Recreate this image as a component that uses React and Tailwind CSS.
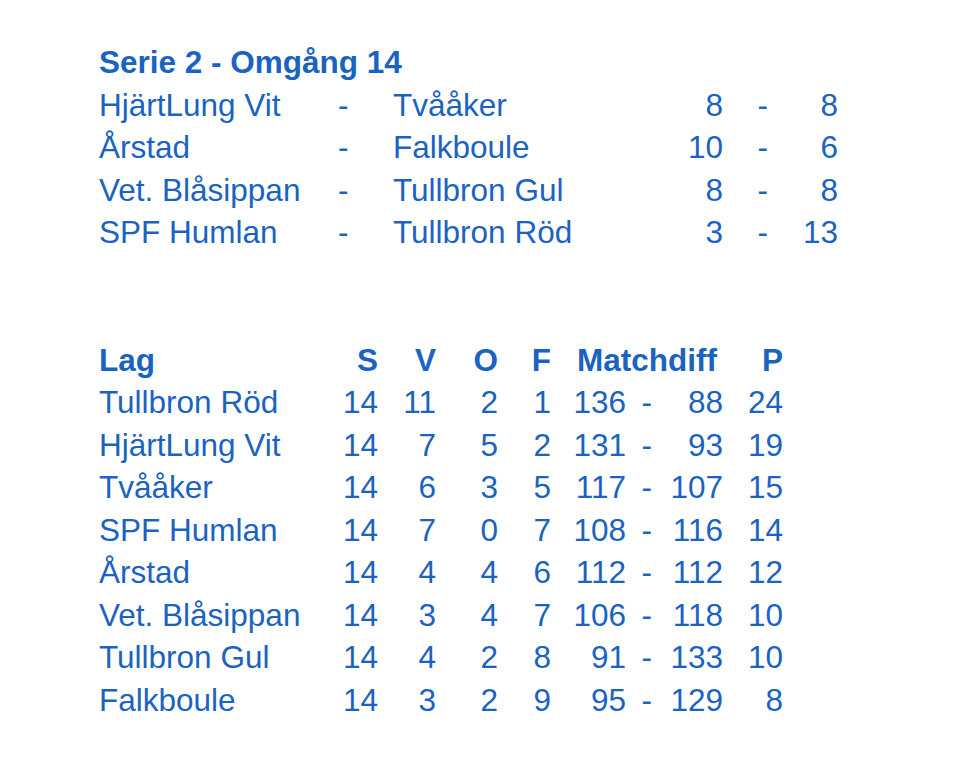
import React from "react";

const matches = [
  ["HjärtLung Vit", "Tvååker", 8, 8],
  ["Årstad", "Falkboule", 10, 6],
  ["Vet. Blåsippan", "Tullbron Gul", 8, 8],
  ["SPF Humlan", "Tullbron Röd", 3, 13],
];

const table = [
  ["Tullbron Röd", 14, 11, 2, 1, 136, 88, 24],
  ["HjärtLung Vit", 14, 7, 5, 2, 131, 93, 19],
  ["Tvååker", 14, 6, 3, 5, 117, 107, 15],
  ["SPF Humlan", 14, 7, 0, 7, 108, 116, 14],
  ["Årstad", 14, 4, 4, 6, 112, 112, 12],
  ["Vet. Blåsippan", 14, 3, 4, 7, 106, 118, 10],
  ["Tullbron Gul", 14, 4, 2, 8, 91, 133, 10],
  ["Falkboule", 14, 3, 2, 9, 95, 129, 8],
];

const matchCols = "grid grid-cols-[239px_55px_250px_80px_45px_70px]";
const tableCols = "grid grid-cols-[219px_60px_58px_62px_53px_75px_26px_71px_60px]";

export default function App() {
  return (
    <div
      className="min-h-[774px] w-[960px] bg-white pl-[99px] pt-[41px] text-[31.5px] leading-[42.5px] text-[#1a63c1]"
      style={{ fontFamily: '"Liberation Sans", Arial, sans-serif' }}
    >
      {/* round results */}
      <div className="font-bold">Serie 2 - Omgång 14</div>
      {matches.map(([home, away, a, b]) => (
        <div key={home} className={matchCols}>
          <div>{home}</div>
          <div>-</div>
          <div>{away}</div>
          <div className="text-right">{a}</div>
          <div className="text-right">-</div>
          <div className="text-right">{b}</div>
        </div>
      ))}

      {/* standings */}
      <div className="mt-[85px]">
        <div className={`${tableCols} font-bold`}>
          <div>Lag</div>
          <div className="text-right">S</div>
          <div className="text-right">V</div>
          <div className="text-right">O</div>
          <div className="text-right">F</div>
          <div className="col-span-3 pl-[26px]">Matchdiff</div>
          <div className="text-right">P</div>
        </div>
        {table.map(([team, s, v, o, f, plus, minus, p]) => (
          <div key={team} className={tableCols}>
            <div>{team}</div>
            <div className="text-right">{s}</div>
            <div className="text-right">{v}</div>
            <div className="text-right">{o}</div>
            <div className="text-right">{f}</div>
            <div className="text-right">{plus}</div>
            <div className="text-right">-</div>
            <div className="text-right">{minus}</div>
            <div className="text-right">{p}</div>
          </div>
        ))}
      </div>
    </div>
  );
}
